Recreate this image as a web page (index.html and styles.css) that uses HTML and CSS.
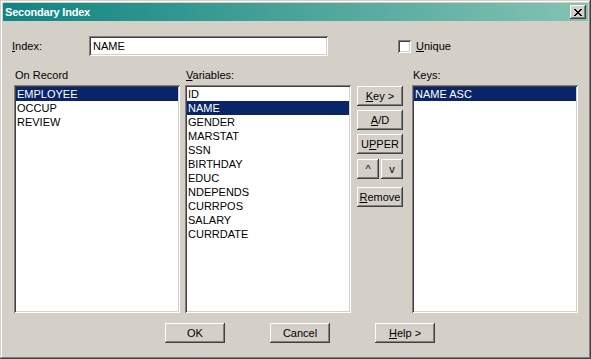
FILE: index.html
```html
<!DOCTYPE html>
<html lang="en">
<head>
    <meta charset="UTF-8">
    <title>Secondary Index</title>
    <link rel="stylesheet" href="styles.css">
</head>
<body>
    <div class="window">
        <div class="titlebar">
            <span class="title">Secondary Index</span>
            <button class="close-btn" aria-label="Close">
                <svg width="8" height="7" viewBox="0 0 8 7" shape-rendering="crispEdges">
                    <path fill="#000" d="M0 0h2v1H0zM6 0h2v1H6zM1 1h2v1H1zM5 1h2v1H5zM2 2h4v1H2zM3 3h2v1H3zM2 4h4v1H2zM1 5h2v1H1zM5 5h2v1H5zM0 6h2v1H0zM6 6h2v1H6z"/>
                </svg>
            </button>
        </div>
        <div class="content">
            <div class="index-row">
                <label class="index-label"><u>I</u>ndex:</label>
                <div class="text-field">NAME</div>
                <span class="checkbox"></span>
                <span class="check-label"><u>U</u>nique</span>
            </div>
            <div class="lists">
                <div class="column">
                    <div class="col-label">On Record</div>
                    <div class="listbox">
                        <div class="item selected">EMPLOYEE</div>
                        <div class="item">OCCUP</div>
                        <div class="item">REVIEW</div>
                    </div>
                </div>
                <div class="column col-vars">
                    <div class="col-label"><u>V</u>ariables:</div>
                    <div class="listbox">
                        <div class="item">ID</div>
                        <div class="item selected">NAME</div>
                        <div class="item">GENDER</div>
                        <div class="item">MARSTAT</div>
                        <div class="item">SSN</div>
                        <div class="item">BIRTHDAY</div>
                        <div class="item">EDUC</div>
                        <div class="item">NDEPENDS</div>
                        <div class="item">CURRPOS</div>
                        <div class="item">SALARY</div>
                        <div class="item">CURRDATE</div>
                    </div>
                </div>
                <div class="side-buttons">
                    <button class="btn side-btn"><u>K</u>ey &gt;</button>
                    <button class="btn side-btn gap4"><u>A</u>/D</button>
                    <button class="btn side-btn gap4">U<u>P</u>PER</button>
                    <div class="arrow-row">
                        <button class="btn arrow-btn">^</button>
                        <button class="btn arrow-btn">v</button>
                    </div>
                    <button class="btn side-btn gap8"><u>R</u>emove</button>
                </div>
                <div class="column col-keys">
                    <div class="col-label">Keys:</div>
                    <div class="listbox">
                        <div class="item selected">NAME ASC</div>
                    </div>
                </div>
            </div>
            <div class="bottom-buttons">
                <button class="btn bottom-btn">OK</button>
                <button class="btn bottom-btn">Cancel</button>
                <button class="btn bottom-btn"><u>H</u>elp &gt;</button>
            </div>
        </div>
    </div>
</body>
</html>
```

FILE: styles.css
```css
body {
    margin: 0;
    padding: 0;
    font-family: 'Liberation Sans', Arial, sans-serif;
    font-size: 11px;
    color: #000;
    background-color: #d4d0c8;
}
.window {
    width: 591px;
    height: 359px;
    box-sizing: border-box;
    padding: 3px;
    background-color: #d4d0c8;
    box-shadow: inset -1px -1px #404040, inset 1px 1px #d4d0c8, inset -2px -2px #808080, inset 2px 2px #fff;
}
.titlebar {
    height: 18px;
    display: flex;
    align-items: center;
    justify-content: space-between;
    padding: 0 2px;
    background: linear-gradient(to right, #0f8482, #84c3b3);
}
.title {
    color: #fff;
    font-weight: bold;
    font-size: 11px;
    letter-spacing: -0.2px;
}
.close-btn {
    width: 16px;
    height: 14px;
    padding: 0;
    border: none;
    display: flex;
    align-items: center;
    justify-content: center;
    background-color: #d4d0c8;
    box-shadow: inset -1px -1px #404040, inset 1px 1px #fff, inset -2px -2px #808080, inset 2px 2px #d4d0c8;
}
.content {
    padding: 15px 0 0 9px;
}
.index-row {
    display: flex;
    align-items: center;
    height: 20px;
}
.index-label {
    width: 77px;
}
.text-field {
    width: 239px;
    height: 20px;
    box-sizing: border-box;
    padding: 3px 0 0 4px;
    background-color: #fff;
    line-height: 14px;
    box-shadow: inset 1px 1px #808080, inset -1px -1px #fff, inset 2px 2px #404040, inset -2px -2px #d4d0c8;
}
.checkbox {
    width: 13px;
    height: 13px;
    margin-left: 70px;
    background-color: #fff;
    box-shadow: inset 1px 1px #808080, inset -1px -1px #fff, inset 2px 2px #404040, inset -2px -2px #d4d0c8;
}
.check-label {
    margin-left: 5px;
}
.lists {
    display: flex;
    margin-top: 12px;
    padding-left: 2px;
}
.column {
    display: flex;
    flex-direction: column;
    width: 166px;
}
.col-label {
    height: 14px;
    line-height: 14px;
    margin-bottom: 3px;
    padding-left: 1px;
}
.col-vars {
    margin-left: 5px;
}
.col-keys {
    margin-left: 9px;
}
.listbox {
    height: 228px;
    box-sizing: border-box;
    padding: 2px;
    background-color: #fff;
    box-shadow: inset 1px 1px #808080, inset -1px -1px #fff, inset 2px 2px #404040, inset -2px -2px #d4d0c8;
}
.item {
    height: 14px;
    line-height: 14px;
    padding-left: 1px;
    white-space: nowrap;
}
.item.selected {
    background-color: #0a246a;
    color: #fff;
}
.btn {
    font-family: 'Liberation Sans', Arial, sans-serif;
    font-size: 11px;
    color: #000;
    padding: 0;
    border: none;
    background-color: #d4d0c8;
    box-shadow: inset -1px -1px #404040, inset 1px 1px #fff, inset -2px -2px #808080, inset 2px 2px #d4d0c8;
}
.side-buttons {
    display: flex;
    flex-direction: column;
    width: 46px;
    margin-left: 6px;
    padding-top: 18px;
}
.side-btn {
    width: 46px;
    height: 20px;
}
.gap4 {
    margin-top: 4px;
}
.gap8 {
    margin-top: 8px;
}
.arrow-row {
    display: flex;
    justify-content: space-between;
    margin-top: 5px;
}
.arrow-btn {
    width: 22px;
    height: 20px;
}
.bottom-buttons {
    display: flex;
    gap: 45px;
    margin-top: 10px;
    padding-left: 153px;
}
.bottom-btn {
    width: 60px;
    height: 20px;
}
```
